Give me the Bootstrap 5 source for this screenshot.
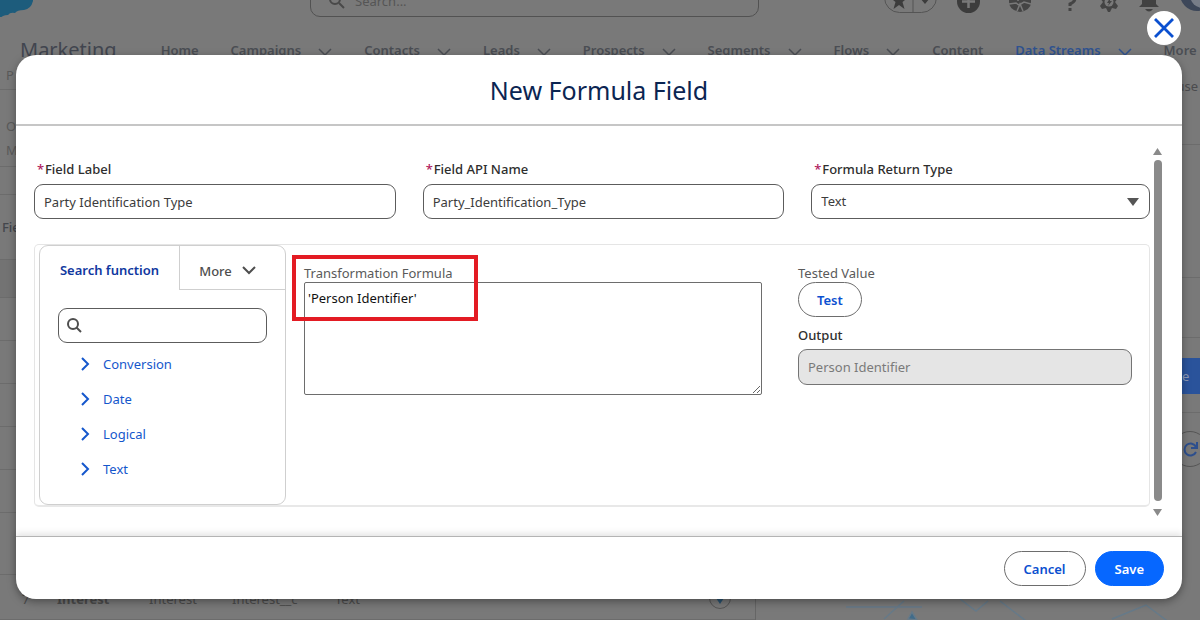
<!DOCTYPE html>
<html lang="en">
<head>
<meta charset="utf-8">
<meta name="viewport" content="width=device-width, initial-scale=1">
<title>New Formula Field</title>
<link href="https://cdn.jsdelivr.net/npm/bootstrap@5.3.0/dist/css/bootstrap.min.css" rel="stylesheet">
<style>
  body { font-family: "Noto Sans", "Open Sans", sans-serif; font-size: 13px; line-height: 20px; color: #2e2e2e; background: #797979; min-height: 100vh; }
  svg { display: block; flex: none; }

  /* dimmed application behind the dialog */
  .app-back { position: absolute; inset: 0; overflow: hidden; color: #4b4b4e; background: #797979; }
  .app-top { height: 37px; margin-top: -20px; }
  .app-search { width: 449px; flex: none; height: 35px; margin-left: 276px; padding: 2px 18px 0; border: 1px solid #525252; border-radius: 10px; gap: 10px; color: #555; line-height: 16px; }
  .app-icons { gap: 29px; padding-bottom: 4px; margin-left: 125px; color: #3c3c3c; }
  .app-icons .tight { margin-left: -10px; }
  .app-nav { padding: 18px 0 0 20px; height: 48px; gap: 32px; font-weight: 600; white-space: nowrap; }
  .app-nav a { color: #4a4d53; text-decoration: none; gap: 17px; }
  .app-nav svg { stroke-width: 1.5; margin-top: 3px; }
  .app-nav a.current { color: #2f528f; }
  .app-title { font-size: 20px; font-weight: 400; color: #41454f; margin-right: 12px; }
  .app-left { width: 63%; border-right: 1px solid #666; }
  .line-row { border-bottom: 1px solid #6c6c6c; height: 43px; padding: 0 2px; }
  .row-head { height: 65px; color: #43464c; font-weight: 500; }
  .row-info { height: 77px; padding: 26px 6px 0; color: #5a5a5a; }
  .row-first { height: 25px; padding: 0 6px; color: #5a5a5a; }
  .row-gap { height: 28px; }
  .row-shade { height: 38px; background: #737373; }
  .row-tall { height: 62px; }
  .side-use { height: 80px; padding-top: 11px; }
  .side-blank { height: 133px; }
  .side-short { height: 60px; }
  .side-save { height: 75px; padding: 20px 0 0; }
  .side-refresh { height: 186px; padding-top: 18px; }
  .back-save { width: 40px; height: 36px; margin-left: auto; background: #2a539b; color: #8c99b5; padding: 8px 0 0 22px; }
  .back-cells { display: grid; grid-template-columns: 35px 92px 83px 103px 1fr 46px; padding: 14px 0 0 22px; color: #4c4c4c; height: 45px; }

  /* dialog */
  .formula-dialog { position: relative; z-index: 2; margin: 55px 18px 20px 16px; background: #fff; border-radius: 20px; box-shadow: 0 3px 8px rgba(0,0,0,.35); }
  .close-round { position: absolute; right: 1px; top: -44px; width: 34px; height: 34px; border: 0; border-radius: 50%; background: #fff; padding: 0; }
  .dialog-head { height: 71px; border-bottom: 2px solid #c6c6c6; }
  .dialog-head h1 { font-size: 25px; line-height: 32px; font-weight: 400; color: #0b2552; }
  .dialog-main { padding: 22px 20px 20px 18px; gap: 2px; }
  .dialog-foot { padding: 14px 18px 13px; gap: 9px; border-top: 1px solid #b4b4b4; box-shadow: 0 -3px 6px rgba(0,0,0,.1); border-radius: 0 0 20px 20px; }
  .field-grid { display: grid; grid-template-columns: 362fr 362fr 339fr; gap: 27px; padding-top: 11px; }
  .field-name { font-weight: 500; line-height: 20px; margin-bottom: 5px; padding-left: 3px; color: #2e2e2e; }
  .field-name b { color: #b0205e; font-weight: 500; display: inline-block; width: 8px; }
  .sf-box { height: 35px; border: 1px solid #5c5c5c; border-radius: 9px; font-size: 13px; color: #3c3c3c; padding: 0 9px; background-color: #fff; }
  .sf-box:disabled { background: #e5e5e5; color: #7a7a7a; border-color: #747474; height: 36px; }
  select.sf-box { background-image: url("data:image/svg+xml,%3Csvg xmlns='http://www.w3.org/2000/svg' viewBox='0 0 12 8'%3E%3Cpath d='M0 0h12L6 8z' fill='%23555'/%3E%3C/svg%3E"); background-size: 12px 8px; background-position: right 10px center; }
  .work-panel { margin: 25px 0 9px; border: 1px solid #e5e5e5; border-bottom: 2px solid #e8e8e8; border-radius: 5px; padding: 0 17px 0 4px; }
  .function-card { width: 247px; height: 260px; border: 1px solid #cfcfcf; border-radius: 9px; flex: none; }
  .fn-tab { border: 0; background: none; padding: 0; font-weight: 600; height: 44px; }
  .fn-tab.on { width: 139px; color: #1038a0; padding-top: 4px; }
  .fn-tab.more { border: solid #cfcfcf; border-width: 0 0 1px 1px; font-weight: 500; color: #4e4e4e; gap: 10px; padding: 6px 10px 0 0; }
  .fn-search { margin: 18px 18px 0; position: relative; }
  .fn-search svg { position: absolute; left: 9px; top: 10px; }
  .fn-search input { padding-left: 32px; }
  .fn-list { margin: 11px 0 0 40px; display: grid; gap: 15px; }
  .fn-list a { color: #1557cc; text-decoration: none; gap: 12px; }
  .formula-col { flex: 458 1 0; margin-left: 18px; padding-top: 18px; position: relative; }
  .test-col { flex: 334 1 0; margin-left: 36px; padding-top: 18px; }
  .soft-label { color: #5a5a5a; line-height: 20px; display: block; height: 19px; }
  .formula-text { display: block; width: 100%; height: 113px; border: 1px solid #6d6d6d; border-radius: 2px; padding: 5px 3px; line-height: 20px; color: #111; }
  .marker { position: absolute; left: -12px; top: 10px; width: 186px; height: 66px; border: 4px solid #e31b23; pointer-events: none; }
  .pill { height: 35px; border-radius: 18px; font-size: 13px; line-height: 20px; padding: 0 18px; font-weight: 600; border: 1px solid #6d6d6d; color: #0b50d0; background: #fff; }
  .dialog-foot .pill { padding: 0 19px; }
  .pill.solid { background: #0667ff; border-color: #0667ff; color: #fff; }
  .scroll-rail { width: 9px; margin-left: 1px; }
  .scroll-rail i { width: 8px; flex: 1; background: #8a8a8a; border-radius: 4px; margin: 5px 0 8px; }
</style>
</head>
<body>

<div class="app-back" aria-hidden="true">
  <div class="app-top d-flex align-items-end">
    <svg width="34" height="38" viewBox="0 0 34 38"><path d="M0 0h33v22q-2 8-9 9q-7 0-9 3q-5-1-7 2q-3 0-5 1l-3 2z" fill="#1d5c7c"/></svg>
    <div class="app-search d-flex align-items-center">
      <svg width="16" height="16" viewBox="0 0 16 16" fill="none" stroke="#494949" stroke-width="2"><circle cx="6" cy="6" r="5"/><path d="M10 10l5 5"/></svg>
      <span>Search...</span>
    </div>
    <div class="app-icons d-flex align-items-end">
      <svg width="54" height="32" viewBox="0 0 54 32"><rect x=".5" y=".5" width="52" height="31" rx="15" fill="none" stroke="#555"/><path d="M29 0v32" stroke="#555"/><path d="M15 11l2.500 6h6l-5 4 2 7-5.500-4-5.500 4 2-7-5-4h6zM36 17h10l-5 6z" fill="#3c3c3c"/></svg>
      <svg class="tight" width="23" height="23" viewBox="0 0 23 23"><circle cx="11.500" cy="11.500" r="11.500" fill="#3c3c3c"/><path d="M11.500 5v13M5 11.500h13" stroke="#797979" stroke-width="2.500"/></svg>
      <svg width="22" height="22" viewBox="0 0 22 22"><path d="M0 4h22v7q0 8-11 10Q0 19 0 11z" fill="#444"/><path d="M0 13l7-1 3 2 5-3 7 2M8 20l3-7 3 7M9 4v6" stroke="#797979" stroke-width="1.500" fill="none"/></svg>
      <svg width="20" height="22" viewBox="0 0 20 22" fill="none" stroke="#444" stroke-width="3"><path d="M5 7q0-5 5-5t5 5q0 4-5 6v2M10 17v3"/></svg>
      <svg class="tight" width="20" height="22" viewBox="0 0 20 22"><path d="M8 0h4l1 4 4-1 2 4-3 4 3 4-2 3-4-1-2 4H9l-2-4-4 1-2-3 3-4-3-4 2-4 4 1z" fill="#444"/><circle cx="10" cy="11" r="4.500" fill="#797979"/><path d="M11 7l-3 5h2l-1 3 4-5h-2z" fill="#444"/></svg>
      <svg class="tight" width="22" height="22" viewBox="0 0 22 22"><path d="M11 0q7 1 7 8v5l3 3H1l3-3V8q0-7 7-8zM7 18h8q-4 5-8 0z" fill="#414141"/></svg>
      <svg class="tight" width="36" height="36" viewBox="0 0 36 36"><circle cx="18" cy="17" r="17" fill="#3d4759"/><circle cx="24" cy="18" r="13" fill="#777d88"/></svg>
    </div>
  </div>

  <div class="app-nav d-flex align-items-center">
    <span class="app-title">Marketing</span>
    <a href="#">Home</a>
    <a href="#" class="d-flex align-items-center">Campaigns <svg width="14" height="8" viewBox="0 0 14 8" fill="none" stroke="currentColor"><path d="M1 1l6 6 6-6"/></svg></a>
    <a href="#" class="d-flex align-items-center">Contacts <svg width="14" height="8" viewBox="0 0 14 8" fill="none" stroke="currentColor"><path d="M1 1l6 6 6-6"/></svg></a>
    <a href="#" class="d-flex align-items-center">Leads <svg width="14" height="8" viewBox="0 0 14 8" fill="none" stroke="currentColor"><path d="M1 1l6 6 6-6"/></svg></a>
    <a href="#" class="d-flex align-items-center">Prospects <svg width="14" height="8" viewBox="0 0 14 8" fill="none" stroke="currentColor"><path d="M1 1l6 6 6-6"/></svg></a>
    <a href="#" class="d-flex align-items-center">Segments <svg width="14" height="8" viewBox="0 0 14 8" fill="none" stroke="currentColor"><path d="M1 1l6 6 6-6"/></svg></a>
    <a href="#" class="d-flex align-items-center">Flows <svg width="14" height="8" viewBox="0 0 14 8" fill="none" stroke="currentColor"><path d="M1 1l6 6 6-6"/></svg></a>
    <a href="#">Content</a>
    <a href="#" class="current d-flex align-items-center">Data Streams <svg width="14" height="8" viewBox="0 0 14 8" fill="none" stroke="currentColor"><path d="M1 1l6 6 6-6"/></svg></a>
    <a href="#">More</a>
  </div>

  <div class="d-flex">
    <div class="app-left">
      <div class="line-row row-first">P</div>
      <div class="line-row row-info"><div class="mb-1">O</div><div>M</div></div>
      <div class="line-row row-gap"></div>
      <div class="line-row row-head d-flex align-items-center">Fie</div>
      <div class="line-row row-shade"></div>
      <div class="line-row"></div><div class="line-row"></div><div class="line-row"></div><div class="line-row"></div><div class="line-row"></div>
      <div class="line-row row-tall"></div>
      <div class="line-row back-cells">
        <span>7</span><b>Interest</b><span>Interest</span><span>Interest__c</span><span>Text</span>
        <svg width="22" height="22" viewBox="0 0 22 22"><circle cx="11" cy="9" r="10.500" fill="none" stroke="#555"/><path d="M7 9h8l-4 6z" fill="#2b526f"/></svg>
      </div>
    </div>
    <div class="flex-grow-1">
      <div class="line-row side-use text-end">use</div>
      <div class="line-row side-blank"></div>
      <div class="line-row side-short"></div>
      <div class="line-row side-save"><div class="back-save">e</div></div>
      <div class="side-refresh"><svg class="ms-auto" width="36" height="36" viewBox="0 0 36 36" fill="none"><circle cx="26" cy="18" r="17.500" stroke="#555"/><path d="M32 16a6 6 0 1 0 0 5M33 11v6h-6" stroke="#2d4f8d" stroke-width="2"/></svg></div>
      <svg class="ms-auto" width="360" height="24" viewBox="0 0 360 24" fill="none" stroke="#667a89" stroke-width="1.500"><path d="M6 8h76M44 20L64 2M120 0l16 12L148 2M160 2l26 20M272 20l34-14 24 18"/><path d="M68 20l4-7 5 8z" fill="#416c8a"/></svg>
    </div>
  </div>
</div>

<main class="formula-dialog" role="dialog" aria-labelledby="dialog-title">
  <button type="button" class="close-round d-flex align-items-center justify-content-center" aria-label="Close">
    <svg width="20" height="20" viewBox="0 0 20 20" stroke="#0b50d0" stroke-width="2.800"><path d="M1 1l18 18M19 1L1 19"/></svg>
  </button>
  <div class="dialog-head d-flex align-items-center justify-content-center"><h1 class="m-0" id="dialog-title">New Formula Field</h1></div>

  <div class="dialog-main d-flex">
    <div class="flex-grow-1">
      <div class="field-grid">
        <div><label class="field-name d-block" for="f-label"><b>*</b>Field Label</label><input class="form-control sf-box" id="f-label" value="Party Identification Type"></div>
        <div><label class="field-name d-block" for="f-api"><b>*</b>Field API Name</label><input class="form-control sf-box" id="f-api" value="Party_Identification_Type"></div>
        <div><label class="field-name d-block" for="f-type"><b>*</b>Formula Return Type</label><select class="form-select sf-box" id="f-type"><option>Text</option></select></div>
      </div>

      <div class="work-panel d-flex">
        <div class="function-card">
          <div class="d-flex">
            <button type="button" class="fn-tab on">Search function</button>
            <button type="button" class="fn-tab more flex-grow-1 d-flex align-items-center justify-content-center">More <svg width="14" height="9" viewBox="0 0 14 9" fill="none" stroke="currentColor" stroke-width="2"><path d="M1 1l6 6 6-6"/></svg></button>
          </div>
          <div class="fn-search">
            <input type="search" class="form-control sf-box" aria-label="Search function">
            <svg width="15" height="15" viewBox="0 0 15 15" fill="none" stroke="#4e4e4e" stroke-width="2"><circle cx="6" cy="6" r="5"/><path d="M9.500 9.500L14 14"/></svg>
          </div>
          <div class="fn-list">
            <a href="#" class="d-flex align-items-center"><svg width="11" height="14" viewBox="0 0 11 14" fill="none" stroke="currentColor" stroke-width="2"><path d="M2 1l6 6-6 6"/></svg>Conversion</a>
            <a href="#" class="d-flex align-items-center"><svg width="11" height="14" viewBox="0 0 11 14" fill="none" stroke="currentColor" stroke-width="2"><path d="M2 1l6 6-6 6"/></svg>Date</a>
            <a href="#" class="d-flex align-items-center"><svg width="11" height="14" viewBox="0 0 11 14" fill="none" stroke="currentColor" stroke-width="2"><path d="M2 1l6 6-6 6"/></svg>Logical</a>
            <a href="#" class="d-flex align-items-center"><svg width="11" height="14" viewBox="0 0 11 14" fill="none" stroke="currentColor" stroke-width="2"><path d="M2 1l6 6-6 6"/></svg>Text</a>
          </div>
        </div>
        <div class="formula-col">
          <label class="soft-label" for="formula">Transformation Formula</label>
          <textarea class="formula-text" id="formula">'Person Identifier'</textarea>
          <div class="marker"></div>
        </div>
        <div class="test-col">
          <span class="soft-label">Tested Value</span>
          <button type="button" class="pill">Test</button>
          <label class="d-block mt-2 mb-1 fw-medium" for="output">Output</label>
          <input class="form-control sf-box" id="output" value="Person Identifier" disabled>
        </div>
      </div>
    </div>
    <div class="scroll-rail d-flex flex-column align-items-center" aria-hidden="true">
      <svg width="9" height="7" viewBox="0 0 9 7"><path d="M0 7l4.500-7L9 7z" fill="#8a8a8a"/></svg>
      <i></i>
      <svg width="9" height="7" viewBox="0 0 9 7"><path d="M0 0l4.500 7L9 0z" fill="#8a8a8a"/></svg>
    </div>
  </div>

  <div class="dialog-foot d-flex justify-content-end">
    <button type="button" class="pill">Cancel</button>
    <button type="button" class="pill solid">Save</button>
  </div>
</main>

<script src="https://cdn.jsdelivr.net/npm/bootstrap@5.3.0/dist/js/bootstrap.bundle.min.js"></script>
</body>
</html>
